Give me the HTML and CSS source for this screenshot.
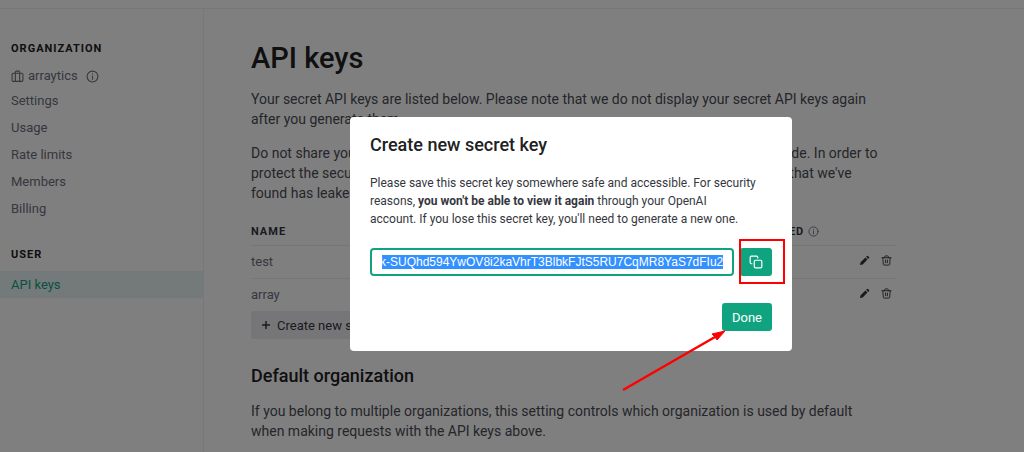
FILE: index.html
```html
<!DOCTYPE html>
<html lang="en">
<head>
    <meta charset="UTF-8">
    <title>API keys</title>
    <link rel="stylesheet" href="styles.css">
</head>
<body>

<svg width="0" height="0" class="sprite">
    <symbol id="info" viewBox="0 0 24 24">
        <circle cx="12" cy="12" r="10"/><path d="M12 17v-6M12 7v.5"/>
    </symbol>
    <symbol id="briefcase" viewBox="0 0 24 24">
        <rect x="2" y="6" width="20" height="15" rx="2"/><path d="M8 21V4a2 2 0 0 1 2-2h4a2 2 0 0 1 2 2v17"/>
    </symbol>
    <symbol id="pencil" viewBox="0 0 24 24">
        <path d="M2 22l1.500-6L14 5.500l4.500 4.500L8 20.500zM15.500 4l2-2a1.500 1.500 0 0 1 2 0l2.500 2.500a1.500 1.500 0 0 1 0 2l-2 2z"/>
    </symbol>
    <symbol id="trash" viewBox="0 0 24 24">
        <path d="M2 6h20M8 6V4a2 2 0 0 1 2-2h4a2 2 0 0 1 2 2v2M4 6l1 14a2 2 0 0 0 2 2h10a2 2 0 0 0 2-2l1-14M10 11v6M14 11v6"/>
    </symbol>
    <symbol id="copy" viewBox="0 0 24 24">
        <rect x="9" y="9" width="13" height="13" rx="2"/><path d="M5 15H4a2 2 0 0 1-2-2V4a2 2 0 0 1 2-2h9a2 2 0 0 1 2 2v1"/>
    </symbol>
</svg>

<header class="topbar"></header>

<div class="page">
    <nav class="sidebar">
        <h2 class="nav-title">Organization</h2>
        <div class="org">
            <svg class="icon"><use href="#briefcase"/></svg>
            <span>arraytics</span>
            <svg class="icon org-info"><use href="#info"/></svg>
        </div>
        <a class="nav-item" href="#settings">Settings</a>
        <a class="nav-item" href="#usage">Usage</a>
        <a class="nav-item" href="#limits">Rate limits</a>
        <a class="nav-item" href="#members">Members</a>
        <a class="nav-item" href="#billing">Billing</a>
        <h2 class="nav-title nav-user">User</h2>
        <a class="nav-item active" href="#keys">API keys</a>
    </nav>

    <main class="content">
        <h1>API keys</h1>
        <p>Your secret API keys are listed below. Please note that we do not display your secret API keys again<br>after you generate them.</p>
        <p>Do not share your API key with others, or expose it in the browser or other client-side code. In order to<br>protect the security of your account, OpenAI may also automatically rotate any API key that we've<br>found has leaked publicly.</p>

        <table class="keys">
            <thead>
                <tr>
                    <th>Name</th>
                    <th>Key</th>
                    <th>Created</th>
                    <th class="used">Last used <svg class="icon small"><use href="#info"/></svg></th>
                    <th></th>
                </tr>
            </thead>
            <tbody>
                <tr>
                    <td>test</td><td></td><td></td><td></td>
                    <td class="actions">
                        <button aria-label="Edit test"><svg class="icon small solid"><use href="#pencil"/></svg></button>
                        <button aria-label="Delete test"><svg class="icon small"><use href="#trash"/></svg></button>
                    </td>
                </tr>
                <tr>
                    <td>array</td><td></td><td></td><td></td>
                    <td class="actions">
                        <button aria-label="Edit array"><svg class="icon small solid"><use href="#pencil"/></svg></button>
                        <button aria-label="Delete array"><svg class="icon small"><use href="#trash"/></svg></button>
                    </td>
                </tr>
            </tbody>
        </table>
        <button class="btn btn-neutral"><svg class="plus" viewBox="0 0 10 10"><path d="M5 1v8M1 5h8"/></svg>Create new secret key</button>

        <h3>Default organization</h3>
        <p>If you belong to multiple organizations, this setting controls which organization is used by default<br>when making requests with the API keys above.</p>
    </main>
</div>

<div class="overlay">
    <div class="modal" role="dialog" aria-labelledby="modal-title">
        <h3 id="modal-title">Create new secret key</h3>
        <p>Please save this secret key somewhere safe and accessible. For security<br>reasons, <b>you won't be able to view it again</b> through your OpenAI<br>account. If you lose this secret key, you'll need to generate a new one.</p>
        <div class="key-row">
            <input id="secret" type="text" aria-label="Secret key" readonly value="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">
            <div class="copy">
                <button class="btn btn-primary" aria-label="Copy"><svg class="icon copy-icon"><use href="#copy"/></svg></button>
                <div class="mark"></div>
            </div>
        </div>
        <div class="modal-footer">
            <button class="btn btn-primary">Done</button>
            <svg class="arrow" viewBox="0 0 104 62"><path d="M1 60L93 7" stroke="red" stroke-width="2.500"/><path d="M103 1L95 10L93 7L90 4z" fill="red" stroke="red"/></svg>
        </div>
    </div>
</div>

<script>
    const secret = document.getElementById("secret");
    secret.focus();
    secret.select();
    secret.scrollLeft = secret.scrollWidth;
</script>

</body>
</html>
```

FILE: styles.css
```css
* {
    box-sizing: border-box;
}
body {
    margin: 0;
    font-family: Roboto, "Liberation Sans", sans-serif;
    font-size: 14px;
    line-height: 20px;
    color: #353740;
    background: #fff;
}
h1, h2, h3, p {
    margin: 0;
}
button, input {
    font-family: inherit;
}
.sprite {
    position: absolute;
}
.icon {
    width: 13px;
    height: 13px;
    fill: none;
    stroke: currentColor;
    stroke-width: 2;
    stroke-linecap: round;
    stroke-linejoin: round;
}
.icon.small {
    width: 11px;
    height: 11px;
}
.icon.solid {
    fill: currentColor;
    stroke: none;
}
.topbar {
    height: 9px;
    border-bottom: 1px solid #f0f0f4;
}
.page {
    display: flex;
    min-height: calc(100vh - 9px);
}

/* sidebar */
.sidebar {
    flex: 0 0 204px;
    padding-top: 30px;
    border-right: 1px solid #f0f0f4;
    color: #6e6e80;
    font-size: 13px;
}
.nav-title {
    padding-left: 11px;
    font-size: 11px;
    font-weight: 700;
    letter-spacing: 1px;
    text-transform: uppercase;
    color: #202123;
}
.org {
    display: flex;
    align-items: center;
    gap: 4px;
    padding: 7px 11px 1px;
}
.org-info {
    margin-left: 4px;
}
.nav-item {
    display: block;
    padding-left: 11px;
    line-height: 27px;
    color: #6e6e80;
    text-decoration: none;
}
.nav-user {
    margin: 23px 0 6px;
}
.nav-item.active {
    color: #10a37f;
    background: #e6f5f2;
}

/* content */
.content {
    flex: 0 1 693px;
    padding: 29px 0 0 47px;
}
h1 {
    margin-bottom: 11px;
    font-size: 29px;
    line-height: 40px;
    font-weight: 500;
    color: #202123;
}
.content p {
    margin-bottom: 14px;
    color: #4a4c55;
    white-space: nowrap;
}
h3 {
    font-size: 18px;
    line-height: 24px;
    font-weight: 500;
    color: #202123;
}
.keys {
    width: 100%;
    margin-top: 18px;
    border-collapse: collapse;
    font-size: 13px;
    color: #6e6e80;
}
.keys th {
    height: 24px;
    padding: 0 0 2px;
    font-size: 11px;
    line-height: 12px;
    letter-spacing: 1px;
    text-align: left;
    text-transform: uppercase;
    color: #353740;
}
.keys .used {
    text-align: right;
    white-space: nowrap;
}
.keys .used .icon {
    vertical-align: middle;
    color: #6e6e80;
}
.keys td {
    height: 33px;
    padding: 0;
    border-top: 1px solid #ececf1;
}
.keys .actions {
    width: 78px;
    padding-right: 5px;
    text-align: right;
    white-space: nowrap;
}
.actions button {
    margin-left: 8px;
    padding: 0;
    border: 0;
    background: none;
    line-height: 10px;
    color: #353740;
}
.btn {
    height: 28px;
    padding: 0 10px;
    border: 0;
    border-radius: 3px;
    font-size: 13px;
}
.btn-neutral {
    display: flex;
    align-items: center;
    gap: 6px;
    background: #ececf1;
    color: #353740;
}
.plus {
    width: 10px;
    height: 10px;
    stroke: currentColor;
    stroke-width: 1.500;
}
.content h3 {
    margin: 25px 0 13px;
}

/* dialog */
.overlay {
    position: fixed;
    inset: 0;
    display: flex;
    justify-content: center;
    align-items: flex-start;
    padding: 117px 0 0 118px;
    background: rgba(0, 0, 0, .5);
}
.modal {
    width: 442px;
    padding: 16px 20px 20px;
    border-radius: 4px;
    background: #fff;
}
.modal p {
    margin: 17px 0 20px;
    font-size: 12px;
    line-height: 18px;
}
.key-row {
    display: flex;
    gap: 6px;
}
.key-row input {
    flex: 1;
    min-width: 0;
    height: 28px;
    padding: 0 9px 0 10px;
    border: 2px solid #10a37f;
    border-radius: 4px;
    outline: 0;
    font-family: "Liberation Sans", sans-serif;
    font-size: 12px;
    color: #353740;
}
.key-row input::selection {
    background: #3390ff;
    color: #fff;
}
.btn-primary {
    background: #10a37f;
    color: #fff;
}
.copy {
    position: relative;
}
.copy .btn {
    display: flex;
    align-items: center;
    padding: 0 9px;
}
.copy-icon {
    width: 14px;
    height: 14px;
}
.mark {
    position: absolute;
    inset: -9px -13px -8px -1px;
    border: 2px solid red;
}
.modal-footer {
    position: relative;
    display: flex;
    justify-content: flex-end;
    margin-top: 27px;
}
.arrow {
    position: absolute;
    top: 27px;
    right: 46px;
    width: 104px;
    height: 62px;
}
```
